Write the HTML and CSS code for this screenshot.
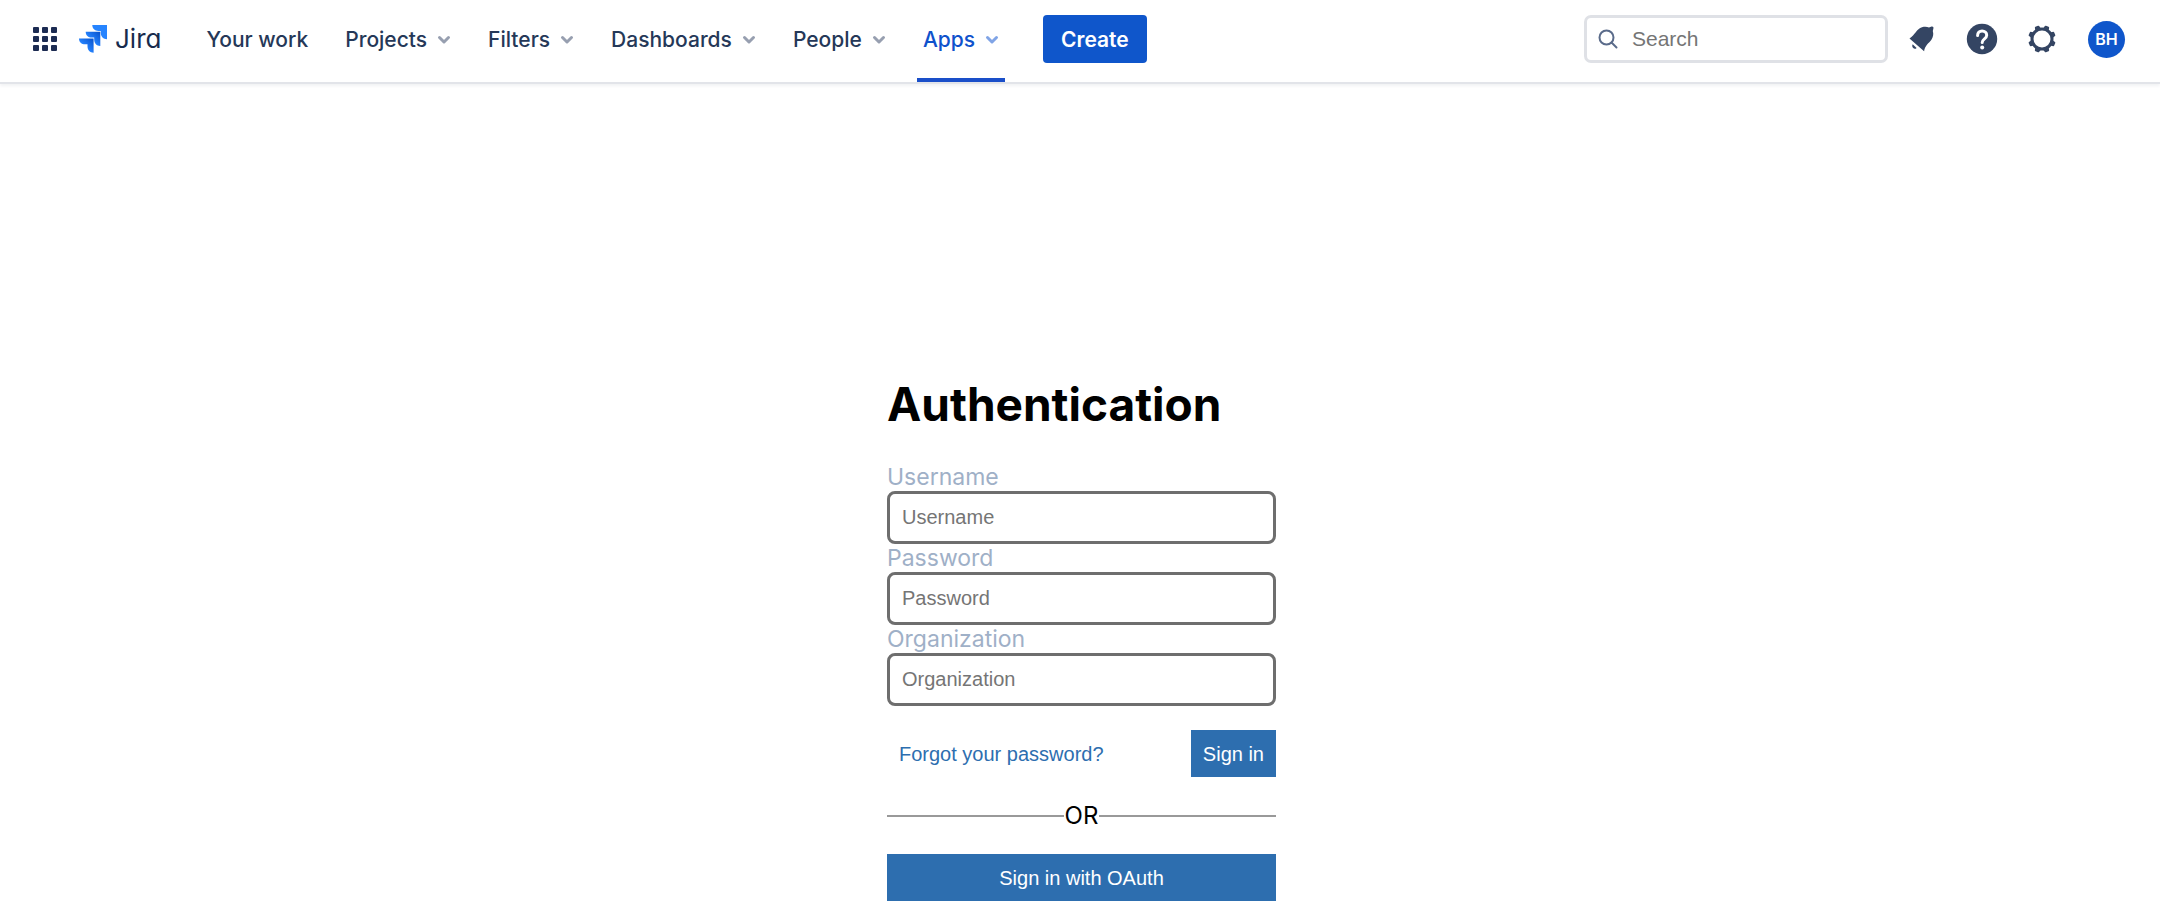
FILE: index.html
```html
<!DOCTYPE html>
<html lang="en">
<head>
<meta charset="utf-8">
<title>Jira - Authentication</title>
<link rel="stylesheet" href="styles.css">
</head>
<body>
<header class="topbar">
  <button class="icon-button switcher" type="button" aria-label="Switch to">
    <svg width="26" height="26" viewBox="0 0 26 26" fill="#1c2b52"><rect x="1" y="1" width="6" height="6" rx="1"/><rect x="10" y="1" width="6" height="6" rx="1"/><rect x="19" y="1" width="6" height="6" rx="1"/><rect x="1" y="10" width="6" height="6" rx="1"/><rect x="10" y="10" width="6" height="6" rx="1"/><rect x="19" y="10" width="6" height="6" rx="1"/><rect x="1" y="19" width="6" height="6" rx="1"/><rect x="10" y="19" width="6" height="6" rx="1"/><rect x="19" y="19" width="6" height="6" rx="1"/></svg>
  </button>
  <a class="brand" href="#">
    <svg width="28" height="28" viewBox="0 0 28 28">
      <defs>
        <linearGradient id="g1" x1="1" y1="0" x2="0.4" y2="0.6"><stop offset="0.1" stop-color="#0a55cf"/><stop offset="1" stop-color="#2684ff"/></linearGradient>
      </defs>
      <path d="M13.3 0H28v14.2c-3.6 0-6.2-2.600-6.200-6.200V5.900h-2.300C15.900 5.900 13.300 3.500 13.300 0z" fill="#2684ff"/>
      <path d="M6.700 6.700h14.600v14.300c-3.600 0-6.100-2.600-6.100-6.200v-2.200h-2.400C9.200 12.600 6.700 10.200 6.700 6.700z" fill="url(#g1)"/>
      <path d="M0 13.400h14.600V27.700c-3.600 0-6.100-2.600-6.100-6.200v-2.200H6.100C2.500 19.300 0 16.900 0 13.400z" fill="url(#g1)"/>
    </svg>
    <span class="brand-name">Jira</span>
  </a>
  <nav class="nav">
    <a class="nav-item" href="#">Your work</a>
    <button class="nav-item" type="button">Projects<svg class="chevron" width="14" height="10" viewBox="0 0 14 10"><path d="M2.500 2.500 7 7l4.500-4.500"/></svg></button>
    <button class="nav-item" type="button">Filters<svg class="chevron" width="14" height="10" viewBox="0 0 14 10"><path d="M2.500 2.500 7 7l4.500-4.500"/></svg></button>
    <button class="nav-item" type="button">Dashboards<svg class="chevron" width="14" height="10" viewBox="0 0 14 10"><path d="M2.500 2.500 7 7l4.500-4.500"/></svg></button>
    <button class="nav-item" type="button">People<svg class="chevron" width="14" height="10" viewBox="0 0 14 10"><path d="M2.500 2.500 7 7l4.500-4.500"/></svg></button>
    <button class="nav-item active" type="button">Apps<svg class="chevron" width="14" height="10" viewBox="0 0 14 10"><path d="M2.500 2.500 7 7l4.500-4.500"/></svg></button>
  </nav>
  <button class="create" type="button">Create</button>
  <div class="tools">
    <label class="search">
      <svg width="20" height="20" viewBox="0 0 20 20" fill="none" stroke="#5a6b8a" stroke-width="2" stroke-linecap="round"><circle cx="8.500" cy="8.500" r="7"/><path d="M13.500 13.500 18.500 18.500"/></svg>
      <input type="search" placeholder="Search" aria-label="Search">
    </label>
    <button class="icon-button" type="button" aria-label="Notifications">
      <svg width="32" height="32" viewBox="0 0 32 32" fill="#344563"><path d="M3.500 15.500C9 12 10.500 6 16 4.300c2.600-.8 5.100-.5 7 .1l2.600-.8c1.300-.3 2.100.5 1.800 1.800l-.6 2.600c.9 2.800.5 5.900-1.400 8.700-2.400 3.400-6.500 5.500-7.300 11.600z"/><path d="M6.700 21.200l3.900 3.700c-.9 1.100-2.400 1.100-3.400.2s-1.300-2.700-.5-3.900z"/></svg>
    </button>
    <button class="icon-button" type="button" aria-label="Help">
      <svg width="32" height="32" viewBox="0 0 32 32"><circle cx="16" cy="16" r="15.200" fill="#344563"/><path d="M11.600 12.500c0-2.800 1.900-4.500 4.500-4.500s4.600 1.700 4.600 4.200c0 3.500-4.500 3.700-4.500 7.300" fill="none" stroke="#fff" stroke-width="3" stroke-linecap="round"/><circle cx="16.200" cy="24.500" r="2" fill="#fff"/></svg>
    </button>
    <button class="icon-button" type="button" aria-label="Settings">
      <svg width="32" height="32" viewBox="0 0 32 32"><circle cx="16" cy="16" r="10" fill="none" stroke="#344563" stroke-width="3"/><g fill="#344563" transform="rotate(22.5 16 16)"><path id="cog" d="M13 6l.7-3.100q.2-.7.900-.7h2.800q.7 0 .9.700l.7 3.100z"/><use href="#cog" transform="rotate(45 16 16)"/><use href="#cog" transform="rotate(90 16 16)"/><use href="#cog" transform="rotate(135 16 16)"/><use href="#cog" transform="rotate(180 16 16)"/><use href="#cog" transform="rotate(225 16 16)"/><use href="#cog" transform="rotate(270 16 16)"/><use href="#cog" transform="rotate(315 16 16)"/></g></svg>
    </button>
    <button class="avatar" type="button" aria-label="Your profile">BH</button>
  </div>
</header>
<main class="page">
  <form class="auth">
    <h1 class="title">Authentication</h1>
    <label class="label" for="username">Username</label>
    <input class="field" id="username" type="text" placeholder="Username">
    <label class="label" for="password">Password</label>
    <input class="field" id="password" type="password" placeholder="Password">
    <label class="label" for="organization">Organization</label>
    <input class="field" id="organization" type="text" placeholder="Organization">
    <div class="actions">
      <a class="forgot" href="#">Forgot your password?</a>
      <button class="primary" type="submit">Sign in</button>
    </div>
    <div class="divider"><hr><span>OR</span><hr></div>
    <button class="primary wide" type="button">Sign in with OAuth</button>
  </form>
</main>
</body>
</html>
```
FILE: styles.css
```css
* {
  box-sizing: border-box;
}

body {
  margin: 0;
  background: #fff;
  color: #000;
  font-family: Inter, "Liberation Sans", sans-serif;
}

button {
  border: 0;
  padding: 0;
  background: none;
  font: inherit;
  cursor: pointer;
}

a {
  text-decoration: none;
}

svg {
  display: block;
  flex: none;
}

.topbar {
  display: flex;
  align-items: center;
  height: 82px;
  padding: 0 35px 4px 32px;
  box-shadow: 0 2px 0 #e2e4e9, 0 4px 3px #f1f2f4;
}

.icon-button {
  display: flex;
}

.brand {
  display: flex;
  align-items: center;
  gap: 8px;
  margin: 0 39px 0 21px;
}

.brand-name {
  color: #172b4d;
  font-size: 26px;
  line-height: 32px;
  font-feature-settings: "cv11";
}

.nav {
  display: flex;
  align-self: stretch;
  gap: 25px;
  margin-bottom: -4px;
}

.nav-item {
  display: flex;
  align-items: center;
  gap: 10px;
  padding: 2px 6px 0;
  border-bottom: 4px solid transparent;
  color: #253858;
  font-size: 21px;
  font-weight: 500;
  line-height: 28px;
}

.chevron {
  fill: none;
  stroke: #979fb0;
  stroke-width: 3;
  stroke-linecap: round;
  stroke-linejoin: round;
}

.active {
  border-bottom-color: #1a4fc9;
  color: #0f52cc;
}

.active .chevron {
  stroke: #80a4e6;
}

.create {
  height: 48px;
  margin-left: 38px;
  padding: 0 18px;
  border-radius: 4px;
  background: #0f56cb;
  color: #fff;
  font-size: 21px;
  font-weight: 600;
}

.tools {
  display: flex;
  align-items: center;
  gap: 28px;
  margin-left: auto;
}

.search {
  display: flex;
  align-items: center;
  gap: 14px;
  width: 304px;
  height: 48px;
  margin-right: -10px;
  padding: 0 11px;
  border: 3px solid #dfe1e6;
  border-radius: 7px;
}

.search input {
  flex: 1;
  min-width: 0;
  padding: 0;
  border: 0;
  outline: 0;
  background: none;
  font: 21px/28px "Liberation Sans", Arial, sans-serif;
}

.search input::placeholder,
.field::placeholder {
  color: #757575;
  opacity: 1;
}

.avatar {
  width: 37px;
  height: 37px;
  margin-left: 2px;
  border-radius: 50%;
  background: #0f56cb;
  color: #fff;
  font-size: 16px;
  font-weight: 600;
}

.page {
  display: flex;
  justify-content: center;
  padding: 292px 0 20px 3px;
}

.auth {
  display: flex;
  flex-direction: column;
  width: 389px;
}

.title {
  margin: 0 0 29px;
  font-size: 46px;
  font-weight: 700;
  line-height: 60px;
}

.label {
  color: #9fb0c7;
  font-size: 23px;
  line-height: 28px;
}

.field {
  width: 100%;
  height: 53px;
  padding: 0 12px;
  border: 3px solid #6e6e6e;
  border-radius: 8px;
  background: #fff;
  font: 20px/28px "Liberation Sans", Arial, sans-serif;
}

.actions {
  display: flex;
  align-items: center;
  justify-content: space-between;
  margin-top: 24px;
  padding-left: 12px;
}

.forgot {
  color: #2d6eaf;
  font: 20px/28px "Liberation Sans", Arial, sans-serif;
}

.primary {
  height: 47px;
  padding: 0 12px;
  background: #2d6eaf;
  color: #fff;
  font: 20px/28px "Liberation Sans", Arial, sans-serif;
}

.divider {
  display: flex;
  align-items: center;
  gap: 1px;
  margin: 24px 0 23px;
  font-size: 24px;
  line-height: 30px;
}

.divider hr {
  flex: 1;
  margin: 0;
  border: 0;
  border-top: 2px solid #999;
}

.wide {
  width: 100%;
}
```
